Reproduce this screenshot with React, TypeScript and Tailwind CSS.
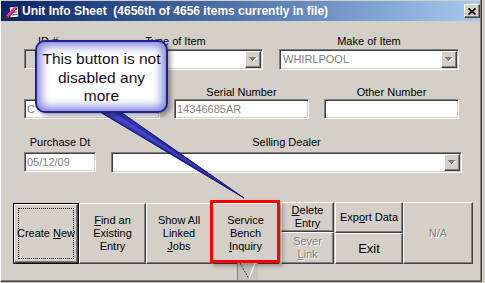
import React from "react";

const sunken =
  "border border-t-[#808080] border-l-[#808080] border-b-white border-r-white shadow-[inset_1px_1px_0_#404040,inset_-1px_-1px_0_#d4d0c8] p-[1px]";
const raised =
  "border border-t-white border-l-white border-b-[#404040] border-r-[#404040] shadow-[inset_-1px_-1px_0_#808080] bg-[#d4d0c8]";
const dis = "text-[#808080] [text-shadow:1px_1px_0_#ffffff]";

function Arrow() {
  return (
    <svg width="8" height="5" viewBox="0 0 8 5" shapeRendering="crispEdges">
      <path d="M1 1h7v1H1z M2 2h5v1H2z M3 3h3v1H3z M4 4h1v1H4z" fill="#ffffff" />
      <path d="M0 0h7v1H0z M1 1h5v1H1z M2 2h3v1H2z M3 3h1v1H3z" fill="#808080" />
    </svg>
  );
}

function Combo({ value }: { value?: string }) {
  return (
    <div className={`${sunken} h-[21px] bg-white flex`}>
      <div className="flex-1 pl-[2px] flex items-center text-[#808080] overflow-hidden whitespace-nowrap">
        {value}
      </div>
      <div className={`${raised} w-[16px] h-full flex items-center justify-center`}>
        <Arrow />
      </div>
    </div>
  );
}

function TextBox({ value, grey }: { value?: string; grey?: boolean }) {
  return (
    <div
      className={`${sunken} h-[20px] flex items-center pl-[2px] text-[#808080] overflow-hidden whitespace-nowrap ${
        grey ? "bg-[#d4d0c8]" : "bg-white"
      }`}
    >
      {value}
    </div>
  );
}

function TitleIcon() {
  return (
    <svg width="15" height="15" viewBox="0 0 15 15">
      <path d="M4 3 L13 2 L14 13 L5 14 Z" fill="#ffffff" stroke="#000000" strokeWidth="1" />
      <path d="M6 6 L12 5.4 M6.2 8.5 L12.3 7.9 M6.4 11 L12.5 10.4" stroke="#404040" strokeWidth="1" />
      <path d="M2 13 L11 3" stroke="#ff2db4" strokeWidth="3" />
      <path d="M3.5 13.5 L12 4" stroke="#000000" strokeWidth="0.8" />
      <path d="M1 14 L2.5 12.5" stroke="#c00000" strokeWidth="2" />
    </svg>
  );
}

function CloseX() {
  return (
    <svg width="8" height="7" viewBox="0 0 8 7">
      <path d="M0.5 0.5 L7.5 6.5 M7.5 0.5 L0.5 6.5" stroke="#000000" strokeWidth="1.7" />
    </svg>
  );
}

export default function App() {
  return (
    <div className="relative w-[485px] h-[283px] bg-[#d4d0c8] overflow-hidden font-['Liberation_Sans',Arial,sans-serif] text-[11px] leading-[13px] text-black">
      <div className="w-[482px] h-[282px] border-l border-b border-r border-l-white border-b-[#404040] border-r-[#404040] shadow-[inset_-1px_-1px_0_#808080] flex flex-col">
        {/* Title bar */}
        <div className="mt-[1px] mr-[1px] h-[20px] flex items-center bg-linear-to-r from-[#0a246a] to-[#a6caf0]">
          <div className="ml-[4px] w-[15px] h-[15px]">
            <TitleIcon />
          </div>
          <span className="ml-[2px] text-white font-bold text-[12px] leading-[14px] whitespace-pre">
            Unit Info Sheet  (4656th of 4656 items currently in file)
          </span>
          <div className={`${raised} ml-auto w-[16px] h-[14px] flex items-center justify-center`}>
            <CloseX />
          </div>
        </div>

        {/* Row 1 */}
        <div className="mt-[14px] flex items-start">
          <div className="ml-[23px] w-[48px] flex flex-col">
            <div className="h-[13px] text-center">ID #</div>
            <div className="mt-[1px]">
              <TextBox grey />
            </div>
          </div>
          <div className="ml-[16px] w-[175px] flex flex-col">
            <div className="h-[13px] text-center">Type of Item</div>
            <div className="mt-[1px]">
              <Combo />
            </div>
          </div>
          <div className="ml-[16px] w-[180px] flex flex-col">
            <div className="h-[13px] text-center">Make of Item</div>
            <div className="mt-[1px]">
              <Combo value="WHIRLPOOL" />
            </div>
          </div>
        </div>

        {/* Row 2 */}
        <div className="mt-[16px] flex items-start">
          <div className="ml-[23px] w-[136px] flex flex-col">
            <div className="h-[13px]" />
            <TextBox value="C" />
          </div>
          <div className="ml-[14px] w-[135px] flex flex-col">
            <div className="h-[13px] text-center">Serial Number</div>
            <TextBox value="14346685AR" />
          </div>
          <div className="ml-[15px] w-[135px] flex flex-col">
            <div className="h-[13px] text-center">Other Number</div>
            <TextBox />
          </div>
        </div>

        {/* Row 3 */}
        <div className="mt-[17px] flex items-start">
          <div className="ml-[23px] w-[72px] flex flex-col">
            <div className="h-[13px] text-center">Purchase Dt</div>
            <div className="mt-[3px]">
              <TextBox value="05/12/09" />
            </div>
          </div>
          <div className="ml-[15px] w-[351px] flex flex-col">
            <div className="h-[13px] text-center">Selling Dealer</div>
            <div className="mt-[3px]">
              <Combo />
            </div>
          </div>
        </div>

        {/* Buttons */}
        <div className="mt-[29px] flex items-start">
          <div className="ml-[12px] mt-[1px] w-[66px] h-[61px] border border-black">
            <div className={`${raised} relative w-full h-full flex items-center justify-center text-center`}>
              <div className="absolute inset-[3px] border border-dotted border-black" />
              <span>
                Create <span className="underline">N</span>ew
              </span>
            </div>
          </div>
          <div className={`${raised} mt-[1px] w-[67px] h-[61px] flex items-center justify-center text-center`}>
            <span>
              <span className="underline">F</span>ind an
              <br />
              Existing
              <br />
              Entry
            </span>
          </div>
          <div className={`${raised} mt-[1px] w-[66px] h-[61px] flex items-center justify-center text-center`}>
            <span>
              Show All
              <br />
              Linked
              <br />
              <span className="underline">J</span>obs
            </span>
          </div>
          <div className={`${raised} mt-[1px] w-[67px] h-[61px] flex items-center justify-center text-center`}>
            <span>
              Service
              <br />
              Bench
              <br />
              <span className="underline">I</span>nquiry
            </span>
          </div>
          <div className="ml-[2px] w-[53px] flex flex-col">
            <div className={`${raised} h-[30px] flex items-center justify-center text-center`}>
              <span>
                <span className="underline">D</span>elete
                <br />
                Entry
              </span>
            </div>
            <div className={`${raised} h-[32px] flex items-center justify-center text-center ${dis}`}>
              <span>
                Sever
                <br />
                <span className="underline">L</span>ink
              </span>
            </div>
          </div>
          <div className="ml-[1px] w-[68px] flex flex-col">
            <div className={`${raised} h-[31px] flex items-center justify-center text-center`}>
              <span>
                Exp<span className="underline">o</span>rt Data
              </span>
            </div>
            <div className={`${raised} h-[31px] flex items-center justify-center text-center text-[13px] leading-[15px]`}>
              <span>Exit</span>
            </div>
          </div>
          <div className={`${raised} w-[70px] h-[62px] flex items-center justify-center text-center ${dis}`}>
            <span>N/A</span>
          </div>
        </div>
      </div>

      {/* small fragment below buttons */}
      <svg className="absolute left-[237px] top-[263px]" width="21" height="17" viewBox="0 0 21 17">
        <rect x="0" y="0" width="21" height="17" fill="#c4c2bc" />
        <rect x="0" y="0" width="1" height="17" fill="#808080" />
        <path d="M3 0 L12 16" stroke="#404040" strokeWidth="1" strokeDasharray="2 1" />
        <path d="M18 0 L12 16" stroke="#ffffff" strokeWidth="1.2" />
      </svg>

      {/* red highlight */}
      <div className="absolute left-[210px] top-[200px] w-[70px] h-[63px] border-[3px] border-[#ff0000] shadow-[3px_3px_4px_rgba(0,0,0,0.3)]" />

      {/* callout tail */}
      <svg className="absolute left-0 top-0 pointer-events-none" width="485" height="283" viewBox="0 0 485 283">
        <defs>
          <linearGradient id="tailg" x1="0" y1="0" x2="0.3" y2="1">
            <stop offset="0" stopColor="#3a3ab8" />
            <stop offset="1" stopColor="#1a1a90" />
          </linearGradient>
        </defs>
        <polygon points="90,106 112,106 244,198" fill="url(#tailg)" stroke="#12127a" strokeWidth="1" strokeLinejoin="round" />
        <polygon points="98,108 107,108 236,192" fill="#5c5cd6" opacity="0.5" />
      </svg>

      {/* callout bubble */}
      <div className="absolute left-[35px] top-[40px] w-[133px] h-[73px] rounded-[10px] border-2 border-[#1e1e96] bg-white shadow-[inset_0_0_10px_4px_#8080da,3px_3px_4px_rgba(0,0,0,0.35)] flex flex-col items-center pt-[8px] text-[15.5px] leading-[18.5px] text-[#1a0d26] text-center">
        <span>This button is not</span>
        <span>disabled any</span>
        <span>more</span>
      </div>
    </div>
  );
}
